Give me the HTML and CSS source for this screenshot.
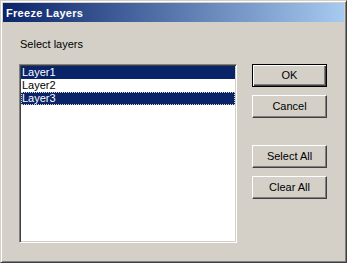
FILE: index.html
```html
<!DOCTYPE html>
<html>
<head>
<meta charset="utf-8">
<link rel="stylesheet" href="styles.css">
</head>
<body>
<div class="window">
  <div class="titlebar"><span class="title">Freeze Layers</span></div>
  <div class="content">
    <div class="left">
      <div class="label">Select layers</div>
      <div class="listbox">
        <div class="item selected">Layer1</div>
        <div class="item">Layer2</div>
        <div class="item selected focus">Layer3</div>
      </div>
    </div>
    <div class="buttons">
      <div class="btn default">OK</div>
      <div class="btn">Cancel</div>
      <div class="btn spaced">Select All</div>
      <div class="btn">Clear All</div>
    </div>
  </div>
</div>
</body>
</html>
```

FILE: styles.css
```css
html, body {
  margin: 0;
  padding: 0;
  background: #d4d0c8;
}
body {
  font-family: "Liberation Sans", Arial, sans-serif;
  font-size: 11px;
  color: #000;
}
.window {
  box-sizing: border-box;
  width: 347px;
  height: 263px;
  background: #d4d0c8;
  border: 1px solid;
  border-color: #d4d0c8 #404040 #404040 #d4d0c8;
  box-shadow: inset 1px 1px #ffffff, inset -1px -1px #808080;
  padding: 2px;
}
.titlebar {
  height: 19px;
  background: linear-gradient(to right, #0a246a, #a6caf0);
  display: flex;
  align-items: center;
  padding-left: 3px;
}
.title {
  color: #fff;
  font-weight: bold;
  font-size: 11px;
  letter-spacing: 0.3px;
  line-height: 13px;
  margin-top: 1px;
}
.content {
  display: flex;
  padding-left: 16px;
}
.left {
  display: flex;
  flex-direction: column;
}
.label {
  margin-top: 16px;
  line-height: 13px;
  padding-left: 1px;
}
.listbox {
  box-sizing: border-box;
  margin-top: 13px;
  width: 218px;
  height: 179px;
  background: #fff;
  border: 1px solid;
  border-color: #808080 #ffffff #ffffff #808080;
  box-shadow: inset 1px 1px #404040, inset -1px -1px #d4d0c8;
  padding: 1px;
}
.item {
  height: 13px;
  line-height: 13px;
  padding-left: 1px;
  box-sizing: border-box;
}
.item.selected {
  background: #0a246a;
  color: #fff;
}
.item.focus {
  outline: 1px dotted #d8d8c0;
  outline-offset: -1px;
}
.buttons {
  display: flex;
  flex-direction: column;
  gap: 8px;
  margin-left: 15px;
  margin-top: 42px;
}
.btn {
  box-sizing: border-box;
  width: 75px;
  height: 23px;
  display: flex;
  align-items: center;
  justify-content: center;
  border: 1px solid;
  border-color: #ffffff #404040 #404040 #ffffff;
  box-shadow: inset -1px -1px #808080;
  padding-bottom: 1px;
}
.btn.default {
  border-color: #000;
  box-shadow: inset 1px 1px #ffffff, inset -1px -1px #404040, inset -2px -2px #808080;
}
.btn.spaced {
  margin-top: 19px;
}
```
